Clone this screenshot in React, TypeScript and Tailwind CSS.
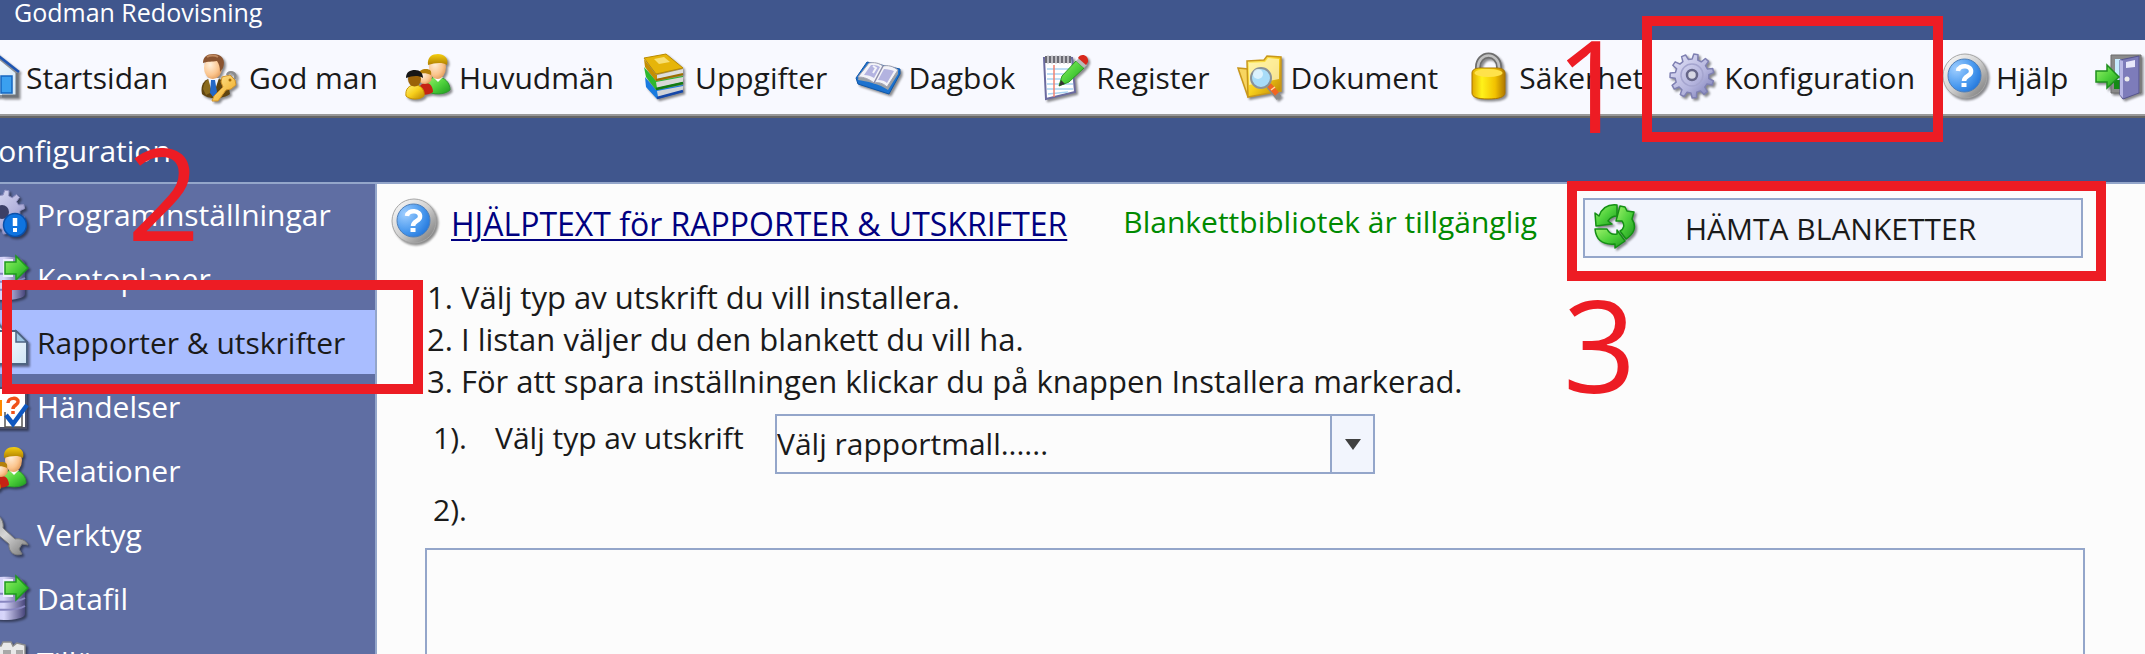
import React from 'react';

const svgClass = 'w-12 h-12 shrink-0 overflow-visible drop-shadow-[2px_2px_1px_rgba(0,0,0,0.45)]';

const gearPath = (cx: number, cy: number, outer: number, inner: number, teeth: number) => {
  const points: string[] = [];
  const step = (Math.PI * 2) / teeth;
  for (let i = 0; i < teeth; i++) {
    const a = i * step - 0.25;
    [
      [inner, -0.3],
      [outer, -0.17],
      [outer, 0.17],
      [inner, 0.3],
    ].forEach(([r, k]) => {
      points.push(`${(cx + r * Math.cos(a + k * step)).toFixed(1)},${(cy + r * Math.sin(a + k * step)).toFixed(1)}`);
    });
  }
  return `M${points.join('L')}Z`;
};

const Gradients = () => (
  <svg className="absolute w-0 h-0" aria-hidden="true">
    <defs>
      <linearGradient id="gold" x1="0" y1="0" x2="1" y2="1">
        <stop offset="0" stopColor="#fff27a" />
        <stop offset="0.5" stopColor="#f7cf1c" />
        <stop offset="1" stopColor="#b98200" />
      </linearGradient>
      <linearGradient id="key" x1="0" y1="0" x2="1" y2="1">
        <stop offset="0" stopColor="#ffe9a0" />
        <stop offset="0.6" stopColor="#f6c04a" />
        <stop offset="1" stopColor="#d9962a" />
      </linearGradient>
      <linearGradient id="lock" x1="0" y1="0" x2="1" y2="0">
        <stop offset="0" stopColor="#e0a800" />
        <stop offset="0.3" stopColor="#fff21a" />
        <stop offset="0.7" stopColor="#f2c200" />
        <stop offset="1" stopColor="#b07800" />
      </linearGradient>
      <linearGradient id="hair" x1="0" y1="0" x2="0" y2="1">
        <stop offset="0" stopColor="#f5cf10" />
        <stop offset="1" stopColor="#b07f00" />
      </linearGradient>
      <radialGradient id="skin" cx="0.35" cy="0.35" r="0.8">
        <stop offset="0" stopColor="#fff0dc" />
        <stop offset="0.6" stopColor="#fbc48c" />
        <stop offset="1" stopColor="#d98e4c" />
      </radialGradient>
      <linearGradient id="green" x1="0" y1="0" x2="1" y2="1">
        <stop offset="0" stopColor="#9cf06a" />
        <stop offset="0.5" stopColor="#4fd23c" />
        <stop offset="1" stopColor="#1e9a1e" />
      </linearGradient>
      <radialGradient id="blue" cx="0.25" cy="0.3" r="0.9">
        <stop offset="0" stopColor="#9fceff" />
        <stop offset="0.6" stopColor="#4898ee" />
        <stop offset="1" stopColor="#1b6fd6" />
      </radialGradient>
      <linearGradient id="rim" x1="0" y1="0" x2="1" y2="1">
        <stop offset="0" stopColor="#ffffff" />
        <stop offset="0.5" stopColor="#d0d0d0" />
        <stop offset="1" stopColor="#707070" />
      </linearGradient>
      <linearGradient id="lilac" x1="0" y1="0" x2="1" y2="1">
        <stop offset="0" stopColor="#e6e6fa" />
        <stop offset="0.6" stopColor="#b4b4dd" />
        <stop offset="1" stopColor="#7678b4" />
      </linearGradient>
      <linearGradient id="drum" x1="0" y1="0" x2="1" y2="0">
        <stop offset="0" stopColor="#c6c2f2" />
        <stop offset="0.5" stopColor="#d8d6fa" />
        <stop offset="1" stopColor="#49477c" />
      </linearGradient>
      <linearGradient id="paper" x1="0" y1="0" x2="1" y2="1">
        <stop offset="0" stopColor="#ffffff" />
        <stop offset="1" stopColor="#cfe6f5" />
      </linearGradient>
      <linearGradient id="steel" x1="0" y1="0" x2="1" y2="1">
        <stop offset="0" stopColor="#8a8a8a" />
        <stop offset="0.5" stopColor="#d6d6d6" />
        <stop offset="1" stopColor="#777777" />
      </linearGradient>
    </defs>
  </svg>
);

const HomeIcon = () => (
  <svg viewBox="0 0 48 48" className={svgClass}>
    <path d="M5 20L24 3l21 17v23H5Z" fill="url(#paper)" stroke="#8a8f96" strokeWidth="2" />
    <path d="M30 43h15V20" fill="none" stroke="#6f747a" strokeWidth="3" />
    <rect x="29" y="23" width="11" height="17" fill="#3aa0f0" stroke="#1566c0" strokeWidth="1.5" />
    <path d="M2 22L24 1l23 18" fill="none" stroke="#1d55b4" strokeWidth="2.5" />
  </svg>
);

const GuardianIcon = () => (
  <svg viewBox="0 0 48 48" className={svgClass}>
    <path d="M7 41c-2-9 2-15 10-16s17 4 18 16c-6 5-22 6-28 0Z" fill="#5f4410" />
    <path d="M8 36c1-7 4-10 8-10l-1 14-4 2Z" fill="#8a6a1c" />
    <path d="M13 25l5 18 6-18Z" fill="#f4f7ff" />
    <path d="M16 27h4l2 12-3 6-4-5Z" fill="#2468c8" />
    <ellipse cx="18" cy="15" rx="9" ry="11" fill="url(#skin)" />
    <path d="M8 10C8 4 12 1 18 1c9 0 13 6 10 14l-3 4c0-5-1-8-3-11-5 1-9 0-14 2Z" fill="#8a5430" />
    <path d="M12 4c3-2 8-2 11 0" fill="none" stroke="#c08a60" strokeWidth="2" />
    <path d="M27 24l8-2 5 5 1 5-5 4-5 1-8 11h-6l2-5 9-9-2-5Z" fill="url(#key)" stroke="#d0922a" strokeWidth="1" />
    <path d="M32 22c2-5 10-3 8 4" fill="none" stroke="#8b8b8b" strokeWidth="2.5" />
    <circle cx="35" cy="27" r="1.5" fill="#a86a00" />
  </svg>
);

const PeopleIcon = () => (
  <svg viewBox="0 0 48 48" className={svgClass}>
    <path d="M22 38c-1-8 2-14 10-14s13 6 13 13c-5 5-18 5-23 1Z" fill="url(#green)" stroke="#2c9c2c" strokeWidth="1" />
    <path d="M28 24l5 5 5-5Z" fill="#fff" />
    <ellipse cx="32.5" cy="14" rx="8.5" ry="12" fill="url(#skin)" />
    <path d="M23 12c-1-8 4-11 10-11s11 4 9 11c-5-3-12-2-19 0Z" fill="url(#hair)" />
    <path d="M13 40c0-6 3-10 8-10s7 5 7 9c-4 3-10 4-15 1Z" fill="#c62314" />
    <circle cx="20" cy="24" r="7" fill="url(#skin)" />
    <path d="M13 21c1-3 4-5 8-5s6 2 5 6c-4-2-8-2-13-1Z" fill="#b5800a" />
    <path d="M1 43c-1-7 3-11 9-11s10 5 9 11c-4 4-14 4-18 0Z" fill="url(#gold)" stroke="#c99400" strokeWidth="1" />
    <ellipse cx="9.5" cy="26" rx="6.5" ry="7.500" fill="#9a6208" />
    <path d="M1 25c0-6 4-8 9-8s8 3 8 8c-5-3-11-2-17 0Z" fill="#161616" />
  </svg>
);

const BooksIcon = () => (
  <svg viewBox="0 0 48 48" className={svgClass}>
    <path d="M4 24L15 37l27-5v7l-26 7L5 34Z" fill="#1a7be0" />
    <path d="M16 38l26-5v5l-25 6Z" fill="#cfd3d8" />
    <path d="M16 45l26-7" stroke="#1647a8" strokeWidth="2.5" />
    <path d="M3 14l12 14 27-5v7l-27 7L5 24Z" fill="#2db82d" />
    <path d="M15 29l27-5v5l-26 6Z" fill="#d8d8d8" />
    <path d="M15 36l27-6" stroke="#127a12" strokeWidth="2.5" />
    <path d="M3 6l12 16 27-6v6l-27 6L4 14Z" fill="#c58e00" />
    <path d="M16 22l26-6v5l-26 5Z" fill="#dedede" />
    <path d="M15 27l27-6" stroke="#9a6e00" strokeWidth="2" />
    <path d="M3 5L25 1l17 14-27 6Z" fill="#e6b50a" stroke="#b98a00" strokeWidth="1" />
    <path d="M13 6l10-2 6 5-11 2Z" fill="#f7df73" />
  </svg>
);

const DiaryIcon = () => (
  <svg viewBox="0 0 48 48" className={svgClass}>
    <path d="M2 25L13 9l33 7v5L35 41 4 31Z" fill="#1c72cf" stroke="#0f56a8" strokeWidth="1" />
    <path d="M4 27c8 1 22 4 30 10l10-16v-4L5 22Z" fill="#9aa0a6" />
    <path d="M4 24L15 10c5-1 10 0 14 3 5-1 10 0 15 4L33 34c-4-4-9-5-13-4-5-4-10-6-16-6Z" fill="#f3f3f8" stroke="#a0a0b0" strokeWidth="1" />
    <path d="M29 13L20 30" stroke="#8e8eaa" strokeWidth="1.5" />
    <path d="M10 22l7-10c3 0 6 0 9 2l-6 11c-3-2-6-3-10-3ZM24 27l6-11c4 0 7 1 10 2l-7 12c-2-2-5-3-9-3Z" fill="#b3b3e0" />
    <path d="M19 13l3 2-3 5" fill="none" stroke="#f3f3f8" strokeWidth="2" />
  </svg>
);

const RegisterIcon = () => (
  <svg viewBox="0 0 48 48" className={svgClass}>
    <path d="M2 5h28l3 34-29 7Z" fill="#fff" stroke="#6b6ba0" strokeWidth="2" />
    <path d="M5 16h25M5 21h25M5 26h25M5 31h26M5 36h26M6 41l20-2" stroke="#a9d4f2" strokeWidth="1.5" />
    <path d="M12 12v32" stroke="#f08070" strokeWidth="1.5" />
    <path d="M3 3h26v7H3Z" fill="#6a6a72" />
    <path d="M6 2v9M10 2v9M14 2v9M18 2v9M22 2v9M26 2v9" stroke="#d8d8dc" strokeWidth="1.5" />
    <path d="M17 33l3-10L34 8l8 7-15 14Z" fill="url(#green)" stroke="#2b9d22" strokeWidth="1" />
    <path d="M17 33l2-6 4 4Z" fill="#333" />
    <path d="M34 8l3-3 8 7-3 3Z" fill="#b9b9b9" />
    <path d="M36 5c2-5 11-4 10 4l-2 3Z" fill="#d8281c" />
  </svg>
);

const FolderSearchIcon = () => (
  <svg viewBox="0 0 48 48" className={svgClass}>
    <path d="M1 15l10 1v28Z" fill="#f8d560" stroke="#c9971c" strokeWidth="1.5" />
    <path d="M10 8l17-1 3-4 14 1v34l-33 6Z" fill="url(#gold)" stroke="#c9971c" strokeWidth="1.5" />
    <path d="M12 10l16-1 3-4 11 1v20L12 32Z" fill="#fff6c0" opacity="0.75" />
    <path d="M32 33l10 12" stroke="#8a8a8a" strokeWidth="6" />
    <path d="M32 32l8 9" stroke="#f26522" strokeWidth="5" />
    <path d="M34 37l4-3" stroke="#ffd9a0" strokeWidth="1.5" />
    <circle cx="24" cy="25" r="10" fill="#a8dcf8" stroke="#8a9299" strokeWidth="2" />
    <circle cx="21" cy="21" r="5" fill="#e8f7ff" opacity="0.8" />
  </svg>
);

const LockIcon = () => (
  <svg viewBox="0 0 48 48" className={svgClass}>
    <path d="M13 22V14a10 11 0 0 1 21 0v8" fill="none" stroke="#6e6e6e" strokeWidth="6" />
    <path d="M13 20V14a10 11 0 0 1 21 0v6" fill="none" stroke="#c0c0c0" strokeWidth="2.5" />
    <path d="M7 20c0-3 3-5 8-5h17c5 0 8 2 8 5v20c0 4-6 6-17 6S7 44 7 40Z" fill="url(#lock)" stroke="#a87400" strokeWidth="1" />
    <ellipse cx="23.5" cy="20" rx="14" ry="4" fill="#ffe24a" />
  </svg>
);

const GearIcon = () => (
  <svg viewBox="0 0 48 48" className={svgClass}>
    <path d={gearPath(22, 23, 22, 17, 11)} fill="url(#lilac)" stroke="#7f80b2" strokeWidth="1.5" strokeLinejoin="round" />
    <circle cx="22" cy="22" r="11" fill="none" stroke="#a5a5cf" strokeWidth="1.5" />
    <circle cx="22" cy="22" r="5" fill="#d8d8e4" stroke="#666688" strokeWidth="2.5" />
  </svg>
);

const HelpIcon = () => (
  <svg viewBox="0 0 48 48" className={svgClass}>
    <circle cx="23" cy="23" r="22" fill="url(#rim)" stroke="#a5a5a5" strokeWidth="1" />
    <circle cx="22.5" cy="22.5" r="16.5" fill="url(#blue)" stroke="#4f7fb8" strokeWidth="1" />
    <path d="M16 18c1-7 14-6 13 1 0 4-7 4-7 9" fill="none" stroke="#fff" strokeWidth="4.5" />
    <rect x="19.5" y="30" width="5" height="4" fill="#fff" />
  </svg>
);

const ExitIcon = () => (
  <svg viewBox="0 0 48 48" className={svgClass}>
    <path d="M16 2h30v38H16Z" fill="#8a8a8a" stroke="#6d6d6d" strokeWidth="1" />
    <path d="M20 6h20v30H20Z" fill="#c7ebff" />
    <path d="M19 27h6v9h-6Z" fill="#158a15" />
    <path d="M25 7L44 3v37L28 46l-3-4Z" fill="#7d7cba" stroke="#56558e" strokeWidth="1" />
    <path d="M25 7l3 1v37l-3-3Z" fill="#b9b8e6" />
    <path d="M31 9l9-2v7l-9 1Z" fill="#e8e8fb" />
    <circle cx="32" cy="26" r="2.5" fill="#ececec" />
    <path d="M1 18h11v-6l12 12-12 11v-6H1Z" fill="url(#green)" stroke="#1f8f1f" strokeWidth="1.5" />
  </svg>
);

const SettingsAlertIcon = () => (
  <svg viewBox="0 0 48 48" className={svgClass}>
    <path d={gearPath(22, 22, 22, 17, 11)} fill="url(#lilac)" stroke="#8f8fc0" strokeWidth="1" />
    <circle cx="21" cy="22" r="7" fill="#3c3f66" />
    <circle cx="34" cy="35" r="11.5" fill="#0f74e0" stroke="#0a4fa8" strokeWidth="1.5" />
    <path d="M34 28v8" stroke="#fff" strokeWidth="4.5" />
    <rect x="32" y="38" width="4" height="4" fill="#fff" />
  </svg>
);

const DataIcon = () => (
  <svg viewBox="0 0 48 48" className={svgClass}>
    <path d="M2 8c0-7 42-7 42 0v32c0 8-42 8-42 0Z" fill="url(#drum)" />
    <path d="M2 16c8 5 34 5 42 0M2 24c8 5 34 5 42 0M2 32c8 5 34 5 42 0" fill="none" stroke="#8886c0" strokeWidth="2" />
    <path d="M22 5h10v18H22Z" fill="#ecebff" />
    <path d="M24 8h11V2l12 12-12 12v-6H24Z" fill="url(#green)" stroke="#1f9a1f" strokeWidth="1.5" />
  </svg>
);

const ReportIcon = () => (
  <svg viewBox="0 0 48 48" className={svgClass}>
    <path d="M2 2h12l8 9v24H2Z" fill="url(#paper)" stroke="#5a6f8c" strokeWidth="2" />
    <path d="M16 13h19l11 11v22H16Z" fill="url(#paper)" stroke="#4e6482" strokeWidth="2" />
    <path d="M35 13v11h11Z" fill="#9dc4e0" stroke="#4e6482" strokeWidth="1.5" />
  </svg>
);

const EventsIcon = () => (
  <svg viewBox="0 0 48 48" className={svgClass}>
    <path d="M2 6h43v40H2Z" fill="#fff" stroke="#4a4f68" strokeWidth="2" />
    <path d="M6 4v8M12 4v8M18 4v8M24 4v8M30 4v8M36 4v8M42 4v8" stroke="#444" strokeWidth="2" />
    <path d="M14 18h7v16h-7Z" fill="#ff8a00" />
    <path d="M27 21c0-6 11-6 10-1 0 3-5 3-5 7M32 29v3" fill="none" stroke="#f0521a" strokeWidth="3.5" />
    <path d="M24 30v15h17V33" fill="none" stroke="#555" strokeWidth="1.5" />
    <path d="M25 33l7 9L46 23" fill="none" stroke="#0f58c0" strokeWidth="4.5" />
  </svg>
);

const WrenchIcon = () => (
  <svg viewBox="0 0 48 48" className={svgClass}>
    <path
      d="M3 3l9 6 2-5c6 2 9 8 8 14l12 11c5-1 11 1 13 6l-6-1-3 5 3 5c-7 3-14-2-13-10L16 24C9 25 3 20 3 13l6 1Z"
      fill="url(#steel)"
      stroke="#7b7b7b"
      strokeWidth="1"
    />
  </svg>
);

const AddonIcon = () => (
  <svg viewBox="0 0 48 48" className={svgClass}>
    <path d="M2 8l6-4h6v4h6l2-4h8l2 4 4-3 8 2v38H2Z" fill="#e9e9e9" stroke="#8c8c8c" strokeWidth="1.5" />
    <path d="M6 12h10v8H6ZM22 12h8v8h-8ZM35 12h7v8h-7Z" fill="#a8a8a8" />
  </svg>
);

const RecycleIcon = () => (
  <svg viewBox="0 0 48 48" className={svgClass}>
    <g fill="url(#green)" stroke="#148f14" strokeWidth="1.5" strokeLinejoin="round">
      <path d="M24 1v11c-4 0-7 2-9 5l4 3-16 2L2 9l4 3C9 4 15 0 24 1Z" />
      <path d="M27 2l5 1 2 4 7 1-2 7c5 8 2 15-6 20l-6-8c4-2 5-6 2-10h-6Z" />
      <path d="M2 25h12c2 4 6 6 10 5v-4l8 11-10 7v-4C10 41 3 36 2 25Z" />
    </g>
  </svg>
);

const menuItems = [
  { label: 'Startsidan', Icon: HomeIcon },
  { label: 'God man', Icon: GuardianIcon },
  { label: 'Huvudmän', Icon: PeopleIcon },
  { label: 'Uppgifter', Icon: BooksIcon },
  { label: 'Dagbok', Icon: DiaryIcon },
  { label: 'Register', Icon: RegisterIcon },
  { label: 'Dokument', Icon: FolderSearchIcon },
  { label: 'Säkerhet', Icon: LockIcon },
  { label: 'Konfiguration', Icon: GearIcon },
  { label: 'Hjälp', Icon: HelpIcon },
];

const sideItems = [
  { label: 'Programinställningar', Icon: SettingsAlertIcon },
  { label: 'Kontoplaner', Icon: DataIcon },
  { label: 'Rapporter & utskrifter', Icon: ReportIcon },
  { label: 'Händelser', Icon: EventsIcon },
  { label: 'Relationer', Icon: PeopleIcon },
  { label: 'Verktyg', Icon: WrenchIcon },
  { label: 'Datafil', Icon: DataIcon },
  { label: 'Tillägg', Icon: AddonIcon },
];

// Red frame and step number drawn over a control
const Step = ({ number, frame, digit }: { number: number; frame: string; digit: string }) => (
  <>
    <span className={`absolute z-10 border-[10px] border-[#ed1c24] pointer-events-none ${frame}`} />
    <span className={`absolute z-10 text-[128px] leading-none text-[#ed1c24] pointer-events-none ${digit}`}>{number}</span>
  </>
);

const App: React.FC = () => {
  return (
    <div className="h-screen overflow-hidden flex flex-col bg-[#fcfcfc] text-[#1a1a1a] text-[30px] font-['Open_Sans','Noto_Sans',sans-serif] whitespace-nowrap">
      <Gradients />
      <header className="shrink-0">
        <div className="h-10 bg-[#40568d] text-white text-[25px] leading-6 px-3.5">Godman Redovisning</div>
        <nav className="h-[78px] bg-[#f8f9ff] border-b-2 border-[#666666]">
          <ul className="h-[76px] flex gap-[27px] -ml-7 border-b-2 border-[#999999]">
            {menuItems.map(({ label, Icon }) => (
              <li key={label} className="relative shrink-0">
                <button type="button" className="h-full flex items-center gap-1.5">
                  <Icon />
                  {label}
                </button>
                {label === 'Konfiguration' && (
                  <Step number={1} frame="-left-7 -right-7 -top-6 -bottom-7" digit="-left-[115px] -top-5" />
                )}
              </li>
            ))}
            <li className="shrink-0">
              <button type="button" aria-label="Avsluta" className="h-full flex items-center">
                <ExitIcon />
              </button>
            </li>
          </ul>
        </nav>
        <h1 className="h-16 flex items-center -ml-5 bg-[#40568d] text-white">Konfiguration</h1>
      </header>

      <div className="flex flex-1 min-h-0 border-t-2 border-[#94a6ca]">
        <aside className="w-[377px] shrink-0 bg-[#5f6ea3] border-r-2 border-[#94a6ca]">
          <ul className="-mt-0.5">
            {sideItems.map(({ label, Icon }) => (
              <li key={label} className="relative">
                <button
                  type="button"
                  className={`w-full h-16 flex items-center text-left ${
                    label === 'Rapporter & utskrifter' ? 'bg-[#a9bdff]' : 'text-white'
                  }`}
                >
                  <span className="flex items-center gap-2 -ml-[19px]">
                    <Icon />
                    {label}
                  </span>
                </button>
                {label === 'Rapporter & utskrifter' && (
                  <Step number={2} frame="left-0.5 -right-12 -top-[30px] -bottom-5" digit="left-[127px] -top-[182px]" />
                )}
              </li>
            ))}
          </ul>
        </aside>

        <main className="flex-1 min-w-0 flex flex-col pt-3.5 pr-[60px]">
          <div className="flex items-start pl-3.5">
            <HelpIcon />
            <a
              href="#hjalp"
              className="ml-3 text-[32px] leading-[52px] text-[#000080] underline decoration-2 underline-offset-3"
            >
              HJÄLPTEXT för RAPPORTER &amp; UTSKRIFTER
            </a>
            <span className="ml-14 leading-12 text-[#008a00]">Blankettbibliotek är tillgänglig</span>
            <div className="relative ml-auto w-[502px] shrink-0 pr-0.5">
              <button type="button" className="w-full h-[60px] flex items-center bg-[#f2f5fd] border-2 border-[#94a6ca] pl-2">
                <RecycleIcon />
                <span className="ml-11">HÄMTA BLANKETTER</span>
              </button>
              <Step number={3} frame="-left-4 -right-[21px] -top-[17px] -bottom-[23px]" digit="-left-5 top-[82px]" />
            </div>
          </div>

          <ol className="mt-[18px] pl-[50px] text-[31px] leading-[42px]">
            <li>1. Välj typ av utskrift du vill installera.</li>
            <li>2. I listan väljer du den blankett du vill ha.</li>
            <li>3. För att spara inställningen klickar du på knappen Installera markerad.</li>
          </ol>

          <div className="mt-3 pl-14 flex items-start leading-12">
            <span className="w-[62px]">1).</span>
            <label htmlFor="rapportmall" className="w-[280px]">
              Välj typ av utskrift
            </label>
            <div className="relative w-[600px] h-[60px] border-2 border-[#94a6ca]">
              <select id="rapportmall" className="w-full h-full appearance-none bg-transparent outline-none">
                <option>Välj rapportmall......</option>
              </select>
              <span className="absolute right-0 inset-y-0 w-[43px] flex items-center justify-center bg-[#f2f5fd] border-l-2 border-[#94a6ca] pointer-events-none">
                <svg viewBox="0 0 16 11" className="w-4 h-[11px]">
                  <path d="M0 0h16L8 11Z" fill="#404040" />
                </svg>
              </span>
            </div>
          </div>

          <div id="blanketter" className="mt-3 pl-14 leading-12">
            2).
          </div>
          <div
            role="listbox"
            aria-labelledby="blanketter"
            className="mt-3.5 ml-12 flex-1 border-2 border-b-0 border-[#94a6ca]"
          />
        </main>
      </div>
    </div>
  );
};

export default App;
